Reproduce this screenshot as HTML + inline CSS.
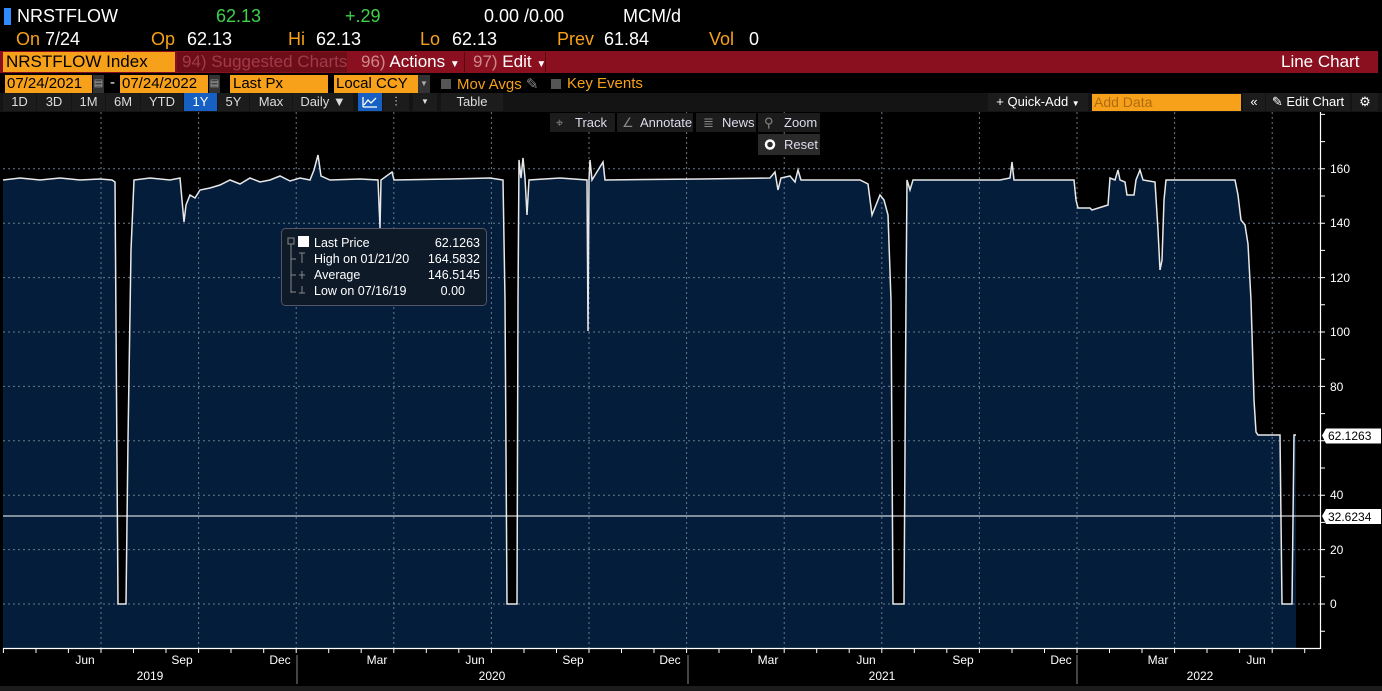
<!DOCTYPE html>
<html><head><meta charset="utf-8"><style>
*{margin:0;padding:0;box-sizing:border-box}
body{width:1382px;height:691px;background:#000;overflow:hidden;position:relative;font-family:"Liberation Sans",sans-serif;color:#fff}
.a{position:absolute;white-space:nowrap}
.r1{font-size:18px;top:6px}
.r2{font-size:18px;top:29px}
.o{color:#f7a11a}
.g{color:#3fd14a}
.t{font-size:14px}
.btn{position:absolute;top:93px;height:18px;background:#1c1c1c;color:#ddd;font-size:13px;text-align:center;line-height:18px}
</style></head><body>
<div class="a" style="left:4px;top:8px;width:7px;height:17px;background:#2f8bff"></div>
<div class="a r1" style="left:17px">NRSTFLOW</div>
<div class="a r1 g" style="left:216px">62.13</div>
<div class="a r1 g" style="left:345px">+.29</div>
<div class="a r1" style="left:484px">0.00 /0.00</div>
<div class="a r1" style="left:623px">MCM/d</div>
<div class="a r2 o" style="left:16px">On</div><div class="a r2" style="left:45px">7/24</div>
<div class="a r2 o" style="left:151px">Op</div><div class="a r2" style="left:187px">62.13</div>
<div class="a r2 o" style="left:288px">Hi</div><div class="a r2" style="left:316px">62.13</div>
<div class="a r2 o" style="left:420px">Lo</div><div class="a r2" style="left:452px">62.13</div>
<div class="a r2 o" style="left:557px">Prev</div><div class="a r2" style="left:604px">61.84</div>
<div class="a r2 o" style="left:709px">Vol</div><div class="a r2" style="left:749px">0</div>

<div class="a" style="left:0;top:51px;width:1378px;height:22px;background:#8a1020"></div>
<div class="a" style="left:3px;top:52px;width:172px;height:20px;background:#f7a11a;color:#000;font-size:17px;line-height:20px;padding-left:3px">NRSTFLOW Index</div>
<div class="a" style="left:177px;top:52px;width:170px;height:20px;background:#6c0d18;color:#a33a48;font-size:17px;line-height:20px;padding-left:5px">94) Suggested Charts</div>
<div class="a" style="left:353px;top:52px;font-size:17px;line-height:20px;padding-left:8px"><span style="color:#c88">96)</span> Actions <span style="font-size:10px">▼</span></div>
<div class="a" style="left:464px;top:52px;width:82px;height:20px;border-left:1px solid #5a0810;border-right:1px solid #5a0810;font-size:17px;line-height:20px;padding-left:8px"><span style="color:#c88">97)</span> Edit <span style="font-size:10px">▼</span></div>
<div class="a" style="left:1281px;top:52px;font-size:17px;line-height:20px">Line Chart</div>

<div class="a" style="left:5px;top:75px;width:87px;height:18px;background:#f7a11a;color:#000;font-size:15px;line-height:18px;padding-left:2px">07/24/2021</div>
<div class="a" style="left:93px;top:75px;width:11px;height:18px;background:#333;color:#aaa;font-size:10px;line-height:18px;text-align:center">▤</div>
<div class="a" style="left:110px;top:74px;font-size:15px">-</div>
<div class="a" style="left:120px;top:75px;width:88px;height:18px;background:#f7a11a;color:#000;font-size:15px;line-height:18px;padding-left:2px">07/24/2022</div>
<div class="a" style="left:209px;top:75px;width:11px;height:18px;background:#333;color:#aaa;font-size:10px;line-height:18px;text-align:center">▤</div>
<div class="a" style="left:230px;top:75px;width:98px;height:18px;background:#f7a11a;color:#000;font-size:15px;line-height:18px;padding-left:3px">Last Px</div>
<div class="a" style="left:334px;top:75px;width:84px;height:18px;background:#f7a11a;color:#000;font-size:15px;line-height:18px;padding-left:2px">Local CCY</div>
<div class="a" style="left:418px;top:75px;width:12px;height:18px;background:#333;color:#aaa;font-size:8px;line-height:18px;text-align:center">▼</div>
<div class="a" style="left:441px;top:79px;width:10px;height:10px;background:#555"></div>
<div class="a o" style="left:457px;top:75px;font-size:15px">Mov Avgs <span style="color:#888">✎</span></div>
<div class="a" style="left:551px;top:79px;width:10px;height:10px;background:#555"></div>
<div class="a o" style="left:567px;top:75px;font-size:15px">Key Events</div>

<div class="a" style="left:0;top:93px;width:1382px;height:19px;background:#141414"></div>
<div class="btn" style="left:3px;width:33px">1D</div>
<div class="btn" style="left:37px;width:34px">3D</div>
<div class="btn" style="left:72px;width:33px">1M</div>
<div class="btn" style="left:106px;width:34px">6M</div>
<div class="btn" style="left:141px;width:42px">YTD</div>
<div class="btn" style="left:184px;width:33px;background:#1660c4;color:#fff">1Y</div>
<div class="btn" style="left:218px;width:31px">5Y</div>
<div class="btn" style="left:250px;width:42px">Max</div>
<div class="btn" style="left:293px;width:60px">Daily ▼</div>
<div class="btn" style="left:358px;width:24px;background:#1660c4"><svg width="16" height="12" style="margin-top:3px"><path d="M1 11V1M1 11H15M2 9L6 4L9 7L14 2" stroke="#fff" fill="none" stroke-width="1.3"/></svg></div>
<div class="btn" style="left:383px;width:26px">⫶</div>
<div class="btn" style="left:413px;width:24px;font-size:8px">▼</div>
<div class="btn" style="left:441px;width:62px">Table</div>
<div class="btn" style="left:988px;width:100px;color:#fff">+ Quick-Add <span style="font-size:8px">▼</span></div>
<div class="a" style="left:1092px;top:94px;width:149px;height:17px;background:#f7a11a;color:#b06a10;font-size:14px;line-height:17px;padding-left:2px">Add Data</div>
<div class="btn" style="left:1243px;width:22px;color:#fff">«</div>
<div class="btn" style="left:1266px;width:84px;color:#fff">✎ Edit Chart</div>
<div class="btn" style="left:1352px;width:26px;color:#fff">⚙</div>

<svg class="a" style="left:0;top:112px" width="1382" height="579" viewBox="0 112 1382 579">
<defs><pattern id="n" width="1" height="1"/></defs>
<path d="M3,180 L20,178 40,180 60,178 80,180 100,179 112,180 115,182 118,604 126,604 128,440 131,250 134,180 150,178 170,180 180,178 182,200 184,222 186,205 190,195 195,198 200,190 210,188 220,185 230,180 240,184 250,178 260,182 270,180 280,176 290,181 300,178 310,180 314,170 318,155 321,176 330,180 360,179 378,180 380,228 381,180 392,172 394,180 450,179 490,178 503,180 505,300 507,604 517,604 518,300 519,160 521,178 523,158 525,178 527,215 529,180 560,178 587,180 588,331 589,180 590,160 592,180 603,162 605,180 700,179 770,178 775,172 778,190 781,178 790,176 795,182 798,170 801,180 860,180 868,184 872,215 876,205 880,195 884,200 888,215 891,300 893,604 904,604 906,300 907,180 910,190 913,180 1000,180 1010,178 1012,162 1014,180 1074,180 1076,200 1078,208 1090,208 1092,210 1108,205 1110,178 1115,180 1118,170 1120,180 1125,182 1127,195 1134,195 1136,180 1140,170 1143,180 1155,182 1158,230 1160,270 1162,260 1164,200 1166,180 1235,180 1238,195 1241,220 1245,225 1248,244 1251,300 1254,400 1256,432 1258,435 1280,435 1282,604 1292,604 1294,435 1296,435 L1296,648 L3,648 Z" fill="#031d3a"/>
<g stroke="#6a7a8a" stroke-dasharray="2,3" stroke-width="1">
<path d="M3 604H1320M3 549.6H1320M3 495.2H1320M3 440.8H1320M3 386.4H1320M3 332H1320M3 277.6H1320M3 223.2H1320M3 168.8H1320"/>
<path d="M101 112V648M198.6 112V648M296.2 112V648M393.8 112V648M491.4 112V648M589 112V648M686.6 112V648M784.2 112V648M881.8 112V648M979.4 112V648M1077 112V648M1174.6 112V648M1272.2 112V648"/>
</g>
<polyline fill="none" stroke="#e8e8e8" stroke-width="1.5" points="3,180 20,178 40,180 60,178 80,180 100,179 112,180 115,182 118,604 126,604 128,440 131,250 134,180 150,178 170,180 180,178 182,200 184,222 186,205 190,195 195,198 200,190 210,188 220,185 230,180 240,184 250,178 260,182 270,180 280,176 290,181 300,178 310,180 314,170 318,155 321,176 330,180 360,179 378,180 380,228 381,180 392,172 394,180 450,179 490,178 503,180 505,300 507,604 517,604 518,300 519,160 521,178 523,158 525,178 527,215 529,180 560,178 587,180 588,331 589,180 590,160 592,180 603,162 605,180 700,179 770,178 775,172 778,190 781,178 790,176 795,182 798,170 801,180 860,180 868,184 872,215 876,205 880,195 884,200 888,215 891,300 893,604 904,604 906,300 907,180 910,190 913,180 1000,180 1010,178 1012,162 1014,180 1074,180 1076,200 1078,208 1090,208 1092,210 1108,205 1110,178 1115,180 1118,170 1120,180 1125,182 1127,195 1134,195 1136,180 1140,170 1143,180 1155,182 1158,230 1160,270 1162,260 1164,200 1166,180 1235,180 1238,195 1241,220 1245,225 1248,244 1251,300 1254,400 1256,432 1258,435 1280,435 1282,604 1292,604 1294,435 1296,435"/>
<line x1="3" y1="516" x2="1320" y2="516" stroke="#fff" stroke-width="1"/>
<path d="M3 648.5H1320M1320.5 112V649" stroke="#fff" stroke-width="1.2" fill="none"/>
<path d="M1320 631.2h5M1320 604h5M1320 576.8h5M1320 549.6h5M1320 522.4h5M1320 495.2h5M1320 468h5M1320 440.8h5M1320 413.6h5M1320 386.4h5M1320 359.2h5M1320 332h5M1320 304.8h5M1320 277.6h5M1320 250.4h5M1320 223.2h5M1320 196h5M1320 168.8h5M1320 141.6h5M1320 114.4h5" stroke="#fff"/>
<path d="M3.4 648v5M36 648v5M68.4 648v5M101 648v5M133.5 648v5M166 648v5M198.6 648v5M231 648v5M263.7 648v5M296.2 648v5M328.7 648v5M361.2 648v5M393.8 648v5M426.3 648v5M458.8 648v5M491.4 648v5M524 648v5M556.5 648v5M589 648v5M621.5 648v5M654 648v5M686.6 648v5M719 648v5M751.6 648v5M784.2 648v5M816.7 648v5M849.2 648v5M881.8 648v5M914.3 648v5M946.8 648v5M979.4 648v5M1012 648v5M1044.5 648v5M1077 648v5M1109.5 648v5M1142 648v5M1174.6 648v5M1207 648v5M1239.6 648v5M1272.2 648v5M1304.7 648v5" stroke="#fff"/>
<g fill="#fff" font-family="Liberation Sans" font-size="12">
<g text-anchor="start">
<text x="1330" y="608">0</text><text x="1330" y="554">20</text><text x="1330" y="499">40</text><text x="1330" y="391">80</text><text x="1330" y="336">100</text><text x="1330" y="282">120</text><text x="1330" y="227">140</text><text x="1330" y="173">160</text>
</g>
<g text-anchor="middle">
<text x="85" y="664">Jun</text><text x="182" y="664">Sep</text><text x="280" y="664">Dec</text><text x="377" y="664">Mar</text><text x="475" y="664">Jun</text><text x="573" y="664">Sep</text><text x="670" y="664">Dec</text><text x="768" y="664">Mar</text><text x="866" y="664">Jun</text><text x="963" y="664">Sep</text><text x="1061" y="664">Dec</text><text x="1158" y="664">Mar</text><text x="1256" y="664">Jun</text>
<text x="150" y="680">2019</text><text x="492" y="680">2020</text><text x="882" y="680">2021</text><text x="1200" y="680">2022</text>
</g></g>
<path d="M297 655V684M688 655V684M1077 655V684" stroke="#888"/>
<rect x="0" y="686" width="1382" height="5" fill="#1c1c1c"/>
<g font-family="Liberation Sans" font-size="12">
<path d="M1322 435.5l4-7h55v15h-55z" fill="#fff"/><text x="1328" y="440" fill="#000">62.1263</text>
<path d="M1322 516l4-7h55v15h-55z" fill="#fff"/><text x="1328" y="521" fill="#000">32.6234</text>
</g>
<rect x="281.5" y="228.5" width="205" height="77" rx="4" fill="#0e1a28" stroke="#556" />
<g font-family="Liberation Sans" font-size="12.5" fill="#fff">
<rect x="298" y="236" width="11" height="11" fill="#fff"/>
<rect x="288" y="238" width="6" height="6" fill="none" stroke="#888"/>
<path d="M291 244V293M291 259h5M291 275h5M291 292h5M299 253h6M302 253v10M299 275h6M302 271v8M302 286v7M299 293h6" stroke="#888" fill="none"/>
<text x="314" y="247">Last Price</text><text x="480" y="247" text-anchor="end">62.1263</text>
<text x="314" y="263">High on 01/21/20</text><text x="480" y="263" text-anchor="end">164.5832</text>
<text x="314" y="279">Average</text><text x="480" y="279" text-anchor="end">146.5145</text>
<text x="314" y="295">Low on 07/16/19</text><text x="465" y="295" text-anchor="end">0.00</text>
</g>
<g font-family="Liberation Sans" font-size="13" fill="#dde">
<rect x="550" y="113" width="65" height="19" fill="#1c1c1c"/><text x="575" y="127">Track</text><text x="556" y="127" fill="#888">⌖</text>
<rect x="617" y="113" width="76" height="19" fill="#1c1c1c"/><text x="640" y="127">Annotate</text><text x="622" y="127" fill="#888">∠</text>
<rect x="696" y="113" width="60" height="19" fill="#1c1c1c"/><text x="722" y="127">News</text><text x="703" y="127" fill="#888">≣</text>
<rect x="758" y="113" width="62" height="19" fill="#1c1c1c"/><text x="784" y="127">Zoom</text><text x="764" y="127" fill="#888">⚲</text>
<rect x="758" y="134" width="62" height="21" fill="#2a2a2a"/><circle cx="770" cy="144.5" r="4" fill="none" stroke="#fff" stroke-width="2.5"/><text x="784" y="149">Reset</text>
</g>
</svg>
</body></html>
